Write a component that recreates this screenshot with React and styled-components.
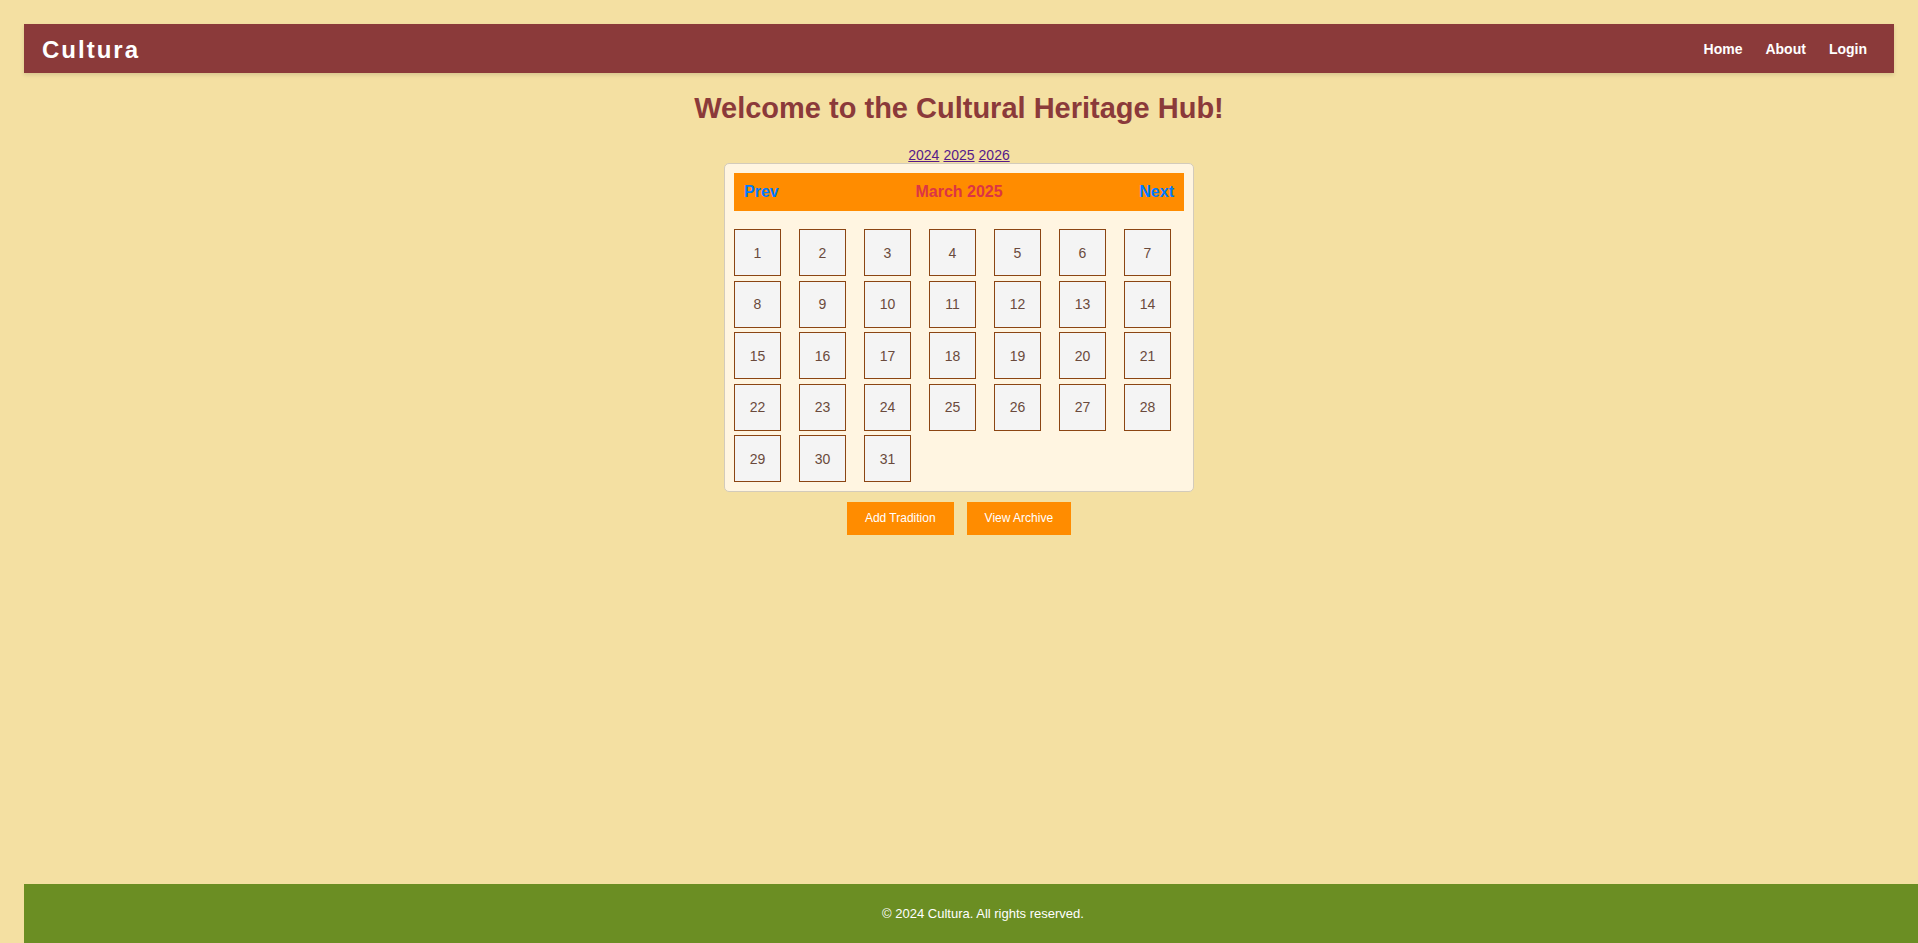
import React from "react";
import styled, { createGlobalStyle } from "styled-components";

const GlobalStyle = createGlobalStyle`
  html, body {
    margin: 0;
    padding: 0;
    overflow-x: hidden;
    background: #f4e0a2;
    font-family: "Liberation Sans", Arial, sans-serif;
  }
  * { box-sizing: border-box; }
`;

const Page = styled.div`
  min-height: 100vh;
  display: flex;
  flex-direction: column;
  padding: 24px 24px 0 24px;
`;

const Header = styled.header`
  display: flex;
  align-items: center;
  justify-content: space-between;
  height: 49px;
  padding: 0 27px 0 18px;
  background: #8b3a3a;
  box-shadow: 0 2px 4px rgba(0, 0, 0, 0.12);
`;

const Logo = styled.div`
  color: #fff;
  font-size: 24px;
  font-weight: bold;
  letter-spacing: 2px;
  margin-top: 2px;
`;

const Nav = styled.nav`
  display: flex;
  gap: 23px;
`;

const NavLink = styled.a`
  color: #fff;
  font-size: 14px;
  font-weight: bold;
  text-decoration: none;
`;

const Main = styled.main`
  flex: 1;
  display: flex;
  flex-direction: column;
  align-items: center;
`;

const Title = styled.h1`
  margin: 19px 0 22px;
  color: #8b3a3a;
  font-size: 29px;
  font-weight: bold;
`;

const Years = styled.div`
  font-size: 14px;
  display: flex;
  gap: 4px;
`;

const YearLink = styled.a`
  color: #551a8b;
  text-decoration: underline;
`;

const Calendar = styled.section`
  width: 470px;
  padding: 9px;
  border: 1px solid #d3cbbb;
  border-radius: 5px;
  background: #fff5e1;
`;

const CalHeader = styled.div`
  display: flex;
  justify-content: space-between;
  align-items: center;
  padding: 10px;
  background: #ff8c00;
  font-size: 16px;
  font-weight: bold;
`;

const NavText = styled.span`
  color: #007bff;
`;

const MonthText = styled.span`
  color: #dc3545;
`;

const Grid = styled.div`
  display: grid;
  grid-template-columns: repeat(7, 47px);
  column-gap: 18px;
  row-gap: 4.5px;
  margin-top: 18px;
`;

const Day = styled.div`
  width: 47px;
  height: 47px;
  border: 1px solid #8b4513;
  background: #f4f4f4;
  display: flex;
  align-items: center;
  justify-content: center;
  color: #6a4a3c;
  font-size: 14px;
`;

const Actions = styled.div`
  display: flex;
  gap: 13px;
  margin-top: 10px;
`;

const Button = styled.button`
  border: none;
  background: #ff8c00;
  color: #fff;
  font-family: "Liberation Sans", Arial, sans-serif;
  font-size: 12px;
  line-height: 13px;
  padding: 10px 18px;
`;

const Footer = styled.footer`
  width: 100vw;
  align-self: flex-start;
  flex-shrink: 0;
  height: 59px;
  background: #6b8e23;
  color: #fff;
  font-size: 13px;
  display: flex;
  align-items: center;
  justify-content: center;
`;

export default function App() {
  const days = Array.from({ length: 31 }, (_, i) => i + 1);
  return (
    <>
      <GlobalStyle />
      <Page>
        <Header>
          <Logo>Cultura</Logo>
          <Nav>
            <NavLink href="#">Home</NavLink>
            <NavLink href="#">About</NavLink>
            <NavLink href="#">Login</NavLink>
          </Nav>
        </Header>
        <Main>
          <Title>Welcome to the Cultural Heritage Hub!</Title>
          <Years>
            <YearLink href="#">2024</YearLink>
            <YearLink href="#">2025</YearLink>
            <YearLink href="#">2026</YearLink>
          </Years>
          <Calendar>
            <CalHeader>
              <NavText>Prev</NavText>
              <MonthText>March 2025</MonthText>
              <NavText>Next</NavText>
            </CalHeader>
            <Grid>
              {days.map((d) => (
                <Day key={d}>{d}</Day>
              ))}
            </Grid>
          </Calendar>
          <Actions>
            <Button>Add Tradition</Button>
            <Button>View Archive</Button>
          </Actions>
        </Main>
        <Footer>© 2024 Cultura. All rights reserved.</Footer>
      </Page>
    </>
  );
}
